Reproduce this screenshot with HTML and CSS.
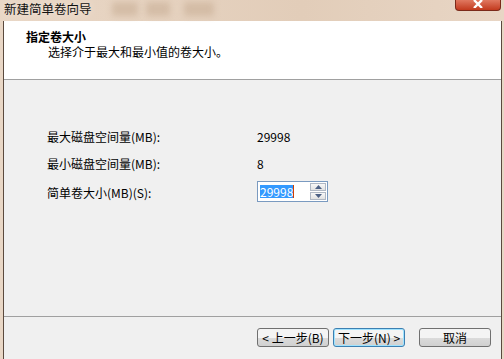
FILE: index.html
```html
<!DOCTYPE html>
<html lang="zh-CN">
<head>
  <meta charset="UTF-8">
  <title>新建简单卷向导</title>
  <link rel="stylesheet" href="styles.css">
</head>
<body>

  <!-- Window title bar -->
  <div class="titlebar">
    <span class="title">新建简单卷向导</span>
    <span class="blur blur-a"></span>
    <span class="blur blur-b"></span>
    <span class="blur blur-c"></span>
    <div class="close">
      <svg width="14" height="8" viewBox="0 0 14 8"><path d="M3 0 L11 8 M11 0 L3 8" stroke="#fff" stroke-width="2.4"/></svg>
    </div>
  </div>

  <div class="frame">
    <div class="header">
      <div class="heading">指定卷大小</div>
      <div class="subheading">选择介于最大和最小值的卷大小。</div>
    </div>

    <div class="content">
      <div class="fields">
        <div class="label">最大磁盘空间量(MB):</div>
        <div class="value">29998</div>

        <div class="label">最小磁盘空间量(MB):</div>
        <div class="value">8</div>

        <div class="label">简单卷大小(MB)(S):</div>
        <div class="spin">
          <div class="spin-input"><span class="selected">29998</span><span class="caret"></span></div>
          <div class="spin-buttons">
            <div class="spin-btn"><svg width="7" height="4" viewBox="0 0 7 4"><path d="M0 4 L3.5 0 L7 4 Z" fill="#4d6185"/></svg></div>
            <div class="spin-btn"><svg width="7" height="4" viewBox="0 0 7 4"><path d="M0 0 L3.5 4 L7 0 Z" fill="#4d6185"/></svg></div>
          </div>
        </div>
      </div>
    </div>

    <div class="footer">
      <div class="btn">&lt; 上一步(B)</div>
      <div class="btn default">下一步(N) &gt;</div>
      <div class="btn cancel">取消</div>
    </div>
  </div>

</body>
</html>
```

FILE: styles.css
```css
body {
  margin: 0;
  width: 504px;
  height: 359px;
  overflow: hidden;
  background: linear-gradient(90deg, #e9d7c6, #e2cdb9 60%, #e8d6c5);
  font-family: "Noto Sans CJK SC", "Liberation Sans", sans-serif;
  font-size: 12px;
  color: #000;
}

.titlebar {
  position: relative;
  height: 21px;
}

.title {
  position: absolute;
  left: 4px;
  top: 1px;
  font-size: 12.5px;
  line-height: 15px;
  color: #111;
  text-shadow: 0 0 6px #f4eadf;
}

/* blurred background showing through the glass */
.blur {
  position: absolute;
  top: 2px;
  height: 14px;
  background: #cdb49c;
  filter: blur(3px);
  opacity: 0.7;
}

.blur-a { left: 112px; width: 26px; }
.blur-b { left: 146px; width: 24px; }
.blur-c { left: 184px; width: 30px; }

.close {
  position: absolute;
  right: 3px;
  top: 0;
  width: 46px;
  height: 11px;
  background: linear-gradient(#e07860, #c23a1e);
  border: 1px solid #7a2a1a;
  border-top: none;
  border-radius: 0 0 4px 4px;
  display: flex;
  justify-content: center;
  align-items: flex-start;
  box-sizing: border-box;
}

.frame {
  margin: 0 2px 0 3px;
  border-left: 1px solid #5b4a3e;
  border-right: 1px solid #5b4a3e;
  height: 338px;
  background: #f0f0f0;
  display: flex;
  flex-direction: column;
}

.header {
  background: #fff;
  height: 59px;
  border-bottom: 1px solid #a0a0a0;
  padding: 9px 0 0 22px;
  box-sizing: border-box;
}

.heading {
  font-weight: bold;
  line-height: 14px;
}

.subheading {
  margin: 1px 0 0 22px;
  line-height: 14px;
}

.content {
  flex: 1;
  padding: 50px 0 0 43px;
  border-bottom: 1px solid #a0a0a0;
}

.fields {
  display: grid;
  grid-template-columns: 210px auto;
  row-gap: 13px;
  align-items: center;
}

.label,
.value {
  line-height: 14px;
}

.spin {
  display: flex;
  width: 71px;
  height: 21px;
  border: 1px solid #7a9ac0;
  box-sizing: border-box;
  background: #fff;
  margin-top: -3px;
}

.spin-input {
  flex: 1;
  display: flex;
  align-items: center;
  padding-left: 2px;
}

.selected {
  background: #3399ff;
  color: #fff;
  line-height: 13px;
}

.caret {
  width: 1px;
  height: 13px;
  background: #d04000;
}

.spin-buttons {
  width: 16px;
  display: flex;
  flex-direction: column;
  gap: 1px;
  padding: 1px 1px 1px 0;
}

.spin-btn {
  flex: 1;
  border: 1px solid #b0b8c4;
  background: linear-gradient(#f8f8f8, #e2e2e2);
  display: flex;
  justify-content: center;
  align-items: center;
}

.footer {
  height: 42px;
  display: flex;
  align-items: center;
  padding-left: 253px;
  padding-bottom: 2px;
  box-sizing: border-box;
}

.btn {
  width: 72px;
  height: 19px;
  box-sizing: border-box;
  border: 1px solid #707070;
  border-radius: 3px;
  background: linear-gradient(#f4f4f4 50%, #dcdcdc 50%, #d0d0d0);
  text-align: center;
  line-height: 17px;
  margin-right: 4px;
}

.btn.default {
  border-color: #3c7fb1;
  box-shadow: inset 0 0 0 1px #9fe3ff;
}

.btn.cancel {
  margin-left: 10px;
}
```
